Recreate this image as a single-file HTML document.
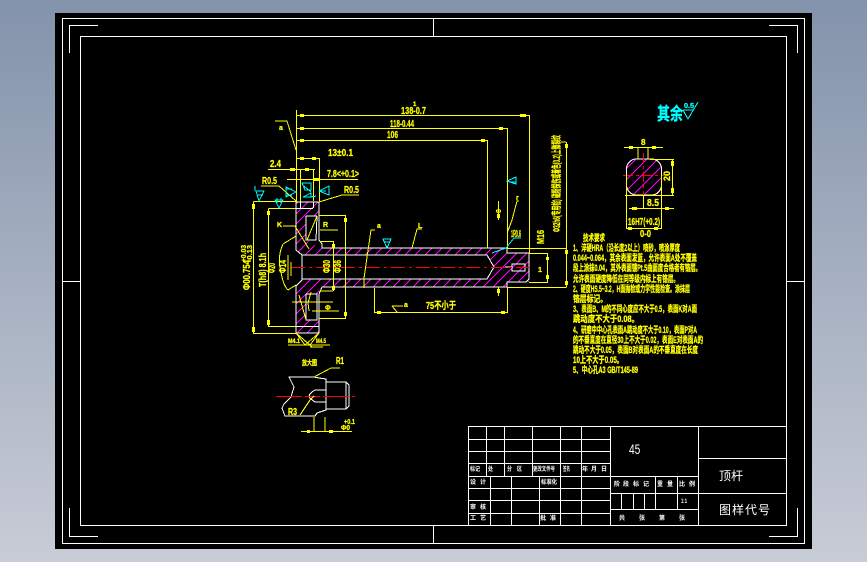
<!DOCTYPE html>
<html><head><meta charset="utf-8"><style>
html,body{margin:0;padding:0;width:867px;height:562px;overflow:hidden;background:linear-gradient(180deg,#8393ab 0%,#a9b3c3 55%,#c8ccd6 100%)}
svg{position:absolute;left:0;top:0}
text{font-family:"Liberation Sans","Noto Sans CJK SC",sans-serif}
.y{fill:#ff0;font-weight:bold;font-size:10px;stroke:#ff0;stroke-width:.25px}
.c{fill:#0ff;font-weight:bold;stroke:#0ff;stroke-width:.3px}
.w{fill:#fff;font-size:6px;font-weight:bold}
.t{fill:#ff0;font-weight:bold;font-size:9px;stroke:#ff0;stroke-width:.3px;font-family:"WenQuanYi Zen Hei","Noto Sans CJK SC",sans-serif}
</style></head><body>
<svg width="867" height="562" viewBox="0 0 867 562" shape-rendering="crispEdges">
<defs>
<clipPath id="cp"><path d="M296 202H319V216H306V240L319 248H333V255H302L296 250ZM333 248H487V255H333ZM320 279H507V287H320ZM487 248H507V253H529V282H507V287H487V279L494 267L487 255ZM296 286L302 279H320V287L319 294H306V320H319V333H296Z"/></clipPath>
<clipPath id="cs"><rect x="626" y="159" width="35" height="36" rx="10"/></clipPath>
</defs>
<rect x="55" y="13" width="757" height="536" fill="#000"/>
<!-- frame -->
<g fill="none" stroke="#fff" stroke-width="1">
<rect x="62.5" y="18.5" width="742" height="525"/>
<rect x="80.5" y="36.5" width="706" height="489"/>
<path d="M69.5 53V25.5H98M797.5 508V536.5H769M769 25.5H797.5V53M69.5 508V536.5H98"/>
<path d="M433.5 18V36M433.5 525V543M62 281.5H80M786 281.5H804"/>
</g>
<!-- hatch -->
<g clip-path="url(#cp)"><path fill="none" stroke="#f0f" stroke-width="1" d="M310 190L160 340M320 190L170 340M330 190L180 340M340 190L190 340M350 190L200 340M360 190L210 340M370 190L220 340M380 190L230 340M390 190L240 340M400 190L250 340M410 190L260 340M420 190L270 340M430 190L280 340M440 190L290 340M450 190L300 340M460 190L310 340M470 190L320 340M480 190L330 340M490 190L340 340M500 190L350 340M510 190L360 340M520 190L370 340M530 190L380 340M540 190L390 340M550 190L400 340M560 190L410 340M570 190L420 340M580 190L430 340M590 190L440 340M600 190L450 340M610 190L460 340M620 190L470 340M630 190L480 340"/></g>
<g clip-path="url(#cs)"><path fill="none" stroke="#f0f" stroke-width="1" d="M645 150L595 200M656 150L606 200M667 150L617 200M678 150L628 200M689 150L639 200M700 150L650 200"/></g>
<!-- white part outline -->
<g fill="none" stroke="#fff" stroke-width="1">
<path d="M296 202H319V240L322 244V248H487L507 248V253H529V279L526 282H507V287H322L319 294V333H296V286L302 280V255L296 250Z"/>
<path d="M302 255H487L494 267L487 279H302"/>
<path d="M306 216H317M306 216V240L316 240L317 216M306 294V320H317V294H306"/>
<path d="M512 264H525V271H512ZM505 267H512"/>
<path d="M296 208.5H313M300.5 202V208M313.5 202V208M296 326.5H319"/>
<rect x="626.5" y="159" width="35" height="36" rx="10"/>
<path d="M638 159V157M648 159V157"/>
<path d="M289 377H314L319 378L326 379V410L317 413L315 416H285L282 408L284 404L291 397L294 387Z"/>
<path d="M326 382H346L349 385V406L346 409H326M346 382V409"/>
<path d="M315 390H326M315 402H326M315 390Q306 395 311 399L315 402"/>
</g>
<!-- red centre lines -->
<g stroke="#f00" stroke-width="1" fill="none">
<path d="M291 267.5H533" stroke-dasharray="14 4 3 4"/>
<path d="M276 396.5H355" stroke-dasharray="26 3 15 3"/>
<path d="M623 175.5H664" stroke-dasharray="10 3 3 3"/>
<path d="M643.5 153V197" stroke-dasharray="10 3 3 3"/>
</g>
<!-- yellow dimensions -->
<g fill="none" stroke="#ff0" stroke-width="1">
<path d="M296.5 115.5H529.5V253M296.5 128.5H507.5V248M296.5 140.5H487.5V248M296.5 158.5H319.5V201M296.5 110V202"/>
<path d="M268 169.5H315M300.5 169V202M313.5 169V201"/>
<path d="M287 179.5H358"/>
<path d="M275 121H287L296 150"/>
<path d="M261 186H279L296 201"/>
<path d="M319 202L342 195H359"/>
<path d="M253.5 201.5H296M253.5 201.5V333.5H296"/>
<path d="M268.5 208.5H296M268.5 208.5V326.5H296"/>
<path d="M319 215.5H345.5V318.5H319"/>
<path d="M320 241.5H333.5V291M333 291H320"/>
<path d="M283 226H295L309 249"/>
<path d="M310 347H323"/>
<path d="M317 216L307 240M320 230H338"/>
<path d="M498.5 201V220M498.5 287V296"/>
<path d="M507.5 232L512 220L517 201H519"/>
<path d="M507 248.5H566.5M507 287.5H566.5M566.5 142V287M561 142H566M529 253.5H547.5M529 282.5H547.5M547.5 253V283"/>
<path d="M374.5 288V312.5H507.5V287"/>
<path d="M392 306L397 312M392 306H403"/>
<path d="M375 230H371L364 278M364 288V278"/>
<path d="M422 229H417L412 248"/>
<path d="M292 302H333M312 311H339M311 292L308 303L309 311M299 295L306 320"/>
<path d="M296 333L305 345L319 333M296 333L310 345L319 333M288 345H330"/>
<path d="M312 347L296 333"/>
<path d="M283 244Q277 257 281 272Q283 285 288 290M283 244L296 236M288 290L296 285"/>
<path d="M291 262V276M288 255V280"/>
<path d="M638 147V159M648 147V159M624 147.5H663M650 159.5H674M625 195.5H674M672.5 159V195M643.5 195V208M629 208.5H674M626.5 175V228M661.5 175V228M626 228.5H662"/>
<path d="M314 417V432M325 417V432M301 431.5H352M314 377L331 368H340M300 415L310 400L314 396"/>
</g>
<!-- arrow ticks -->
<g stroke="#ff0" stroke-width="3" fill="none">
<path d="M300 115.5H304M520 115.5H526M300 128.5H304M499 128.5H503M300 140.5H304M481 140.5H485M300 158.5H304M312 158.5H316"/>
<path d="M290 169.5H295M305 169.5H309M314 179.5H320M253.5 204V209M268.5 211V215M253.5 327V332M268.5 320V325M345.5 218V222M345.5 312V316M333.5 244V248M333.5 286V290M672.5 161V166M672.5 188V193M632 208.5H637M665 208.5H669M628 228.5H632M654 228.5H658M629 147.5H633M652 147.5H656M547.5 257V260M547.5 275V279M566.5 144V148M566.5 250V254M566.5 281V285M377 312.5H381M501 312.5H505M498.5 214V218M498.5 289V293"/>
<path d="M307 431.5H310M329 431.5H333"/>
</g>
<g class="y">
<text x="401" y="114" textLength="25" lengthAdjust="spacingAndGlyphs">138-0.7</text>
<text x="390" y="127" textLength="24" lengthAdjust="spacingAndGlyphs">118-0.44</text>
<text x="387" y="138" textLength="11" lengthAdjust="spacingAndGlyphs">106</text>
<text x="328" y="156" textLength="25" lengthAdjust="spacingAndGlyphs">13±0.1</text>
<text x="270" y="167" textLength="11" lengthAdjust="spacingAndGlyphs">2.4</text>
<text x="327" y="177" textLength="32" lengthAdjust="spacingAndGlyphs">7.8&lt;+0.1&gt;</text>
<text x="262" y="184" textLength="15" lengthAdjust="spacingAndGlyphs">R0.5</text>
<text x="344" y="193" textLength="15" lengthAdjust="spacingAndGlyphs">R0.5</text>
<text x="279" y="130" font-size="7">a</text>
<text x="413" y="106" font-size="6">1</text>
<text x="516" y="200" font-size="7">r</text>
<text x="277" y="227" font-size="7">K</text>
<text x="323" y="227" font-size="7">R</text>
<text x="377" y="228" font-size="7">a</text>
<text x="418" y="228" font-size="7">L</text>
<text x="404" y="307" font-size="7">a</text>
<text x="426" y="309" textLength="30" lengthAdjust="spacingAndGlyphs">75不小于</text>
<text x="325" y="310" font-size="7">Φ</text>
<text x="288" y="343" font-size="6" textLength="12" lengthAdjust="spacingAndGlyphs">M4.1</text>
<text x="316" y="343" font-size="6" textLength="10" lengthAdjust="spacingAndGlyphs">M4.5</text>
<text x="302" y="365" font-size="7" textLength="15" lengthAdjust="spacingAndGlyphs">放大图</text>
<text x="336" y="364" textLength="8" lengthAdjust="spacingAndGlyphs">R1</text>
<text x="288" y="415" textLength="9" lengthAdjust="spacingAndGlyphs">R3</text>
<text x="344" y="424" font-size="7" textLength="11" lengthAdjust="spacingAndGlyphs">+0.1</text>
<text x="341" y="430" font-size="7" textLength="9" lengthAdjust="spacingAndGlyphs">Φ0</text>
<text x="641" y="145" font-size="8">8</text>
<text x="647" y="206" textLength="12" lengthAdjust="spacingAndGlyphs">8.5</text>
<text x="628" y="225" textLength="32" lengthAdjust="spacingAndGlyphs">16H7(+0.2)</text>
<text x="640" y="237" textLength="11" lengthAdjust="spacingAndGlyphs">0-0</text>
<text transform="translate(670 181) rotate(-90)" font-size="9">20</text>
<text transform="translate(250 290) rotate(-90)" textLength="30" lengthAdjust="spacingAndGlyphs">Φ00.754</text>
<text transform="translate(246 262) rotate(-90)" font-size="7" textLength="17" lengthAdjust="spacingAndGlyphs">+0.03</text>
<text transform="translate(252 262) rotate(-90)" font-size="7" textLength="17" lengthAdjust="spacingAndGlyphs">-0.13</text>
<text transform="translate(266 287) rotate(-90)" textLength="34" lengthAdjust="spacingAndGlyphs">T(h8) 8.1h</text>
<text transform="translate(275 273) rotate(-90)" textLength="10" lengthAdjust="spacingAndGlyphs">Φ20</text>
<text transform="translate(286 273) rotate(-90)" textLength="13" lengthAdjust="spacingAndGlyphs">Φ14</text>
<text transform="translate(330 273) rotate(-90)" textLength="13" lengthAdjust="spacingAndGlyphs">Φ30</text>
<text transform="translate(341 273) rotate(-90)" textLength="13" lengthAdjust="spacingAndGlyphs">Φ36</text>
<text transform="translate(544 244) rotate(-90)" textLength="14" lengthAdjust="spacingAndGlyphs">M16</text>
<text x="538" y="272" font-size="7">1</text>
<text transform="translate(501 213) rotate(-90)" font-size="7">0</text>
<text transform="translate(560 232) rotate(-90)" textLength="97" lengthAdjust="spacingAndGlyphs">Φ32h6(专用检) 磁粉探伤或着色(0.2)上微裂纹</text>
</g>
<!-- tech text -->
<g class="t">
<text x="583" y="241" textLength="22" lengthAdjust="spacingAndGlyphs">技术要求</text>
<text x="573" y="251" textLength="107" lengthAdjust="spacingAndGlyphs">1、淬硬HRA（沿长度2以上）喷砂，喷涂厚度</text>
<text x="573" y="261" textLength="124" lengthAdjust="spacingAndGlyphs">0.044~0.064，其余表面发蓝，允许表面A处不覆盖</text>
<text x="573" y="271" textLength="128" lengthAdjust="spacingAndGlyphs">段上涂抹0.04，其外表面镀Pt.5曲面度合格者有铬层。</text>
<text x="573" y="282" textLength="106" lengthAdjust="spacingAndGlyphs">允许表面硬度降低在同等级内标上有铬层。</text>
<text x="573" y="292" textLength="117" lengthAdjust="spacingAndGlyphs">2、硬度HS.5~3.2，H面抛检或力学性能检查。涂抹层</text>
<text x="573" y="302" textLength="34" lengthAdjust="spacingAndGlyphs">铬层标记。</text>
<text x="573" y="312" textLength="124" lengthAdjust="spacingAndGlyphs">3、表面B、M的不同心度应不大于0.5，表面K对A面</text>
<text x="573" y="322" textLength="66" lengthAdjust="spacingAndGlyphs">跳动度不大于0.08。</text>
<text x="573" y="333" textLength="124" lengthAdjust="spacingAndGlyphs">4、研磨中中心孔表面A跳动度不大于0.10，表面P对A</text>
<text x="573" y="343" textLength="130" lengthAdjust="spacingAndGlyphs">的不垂直度在直径30上不大于0.02，表面E对表面A的</text>
<text x="573" y="353" textLength="125" lengthAdjust="spacingAndGlyphs">跳动不大于0.05，表面B对表面A的不垂直度在长度</text>
<text x="573" y="363" textLength="50" lengthAdjust="spacingAndGlyphs">10上不大于0.05。</text>
<text x="573" y="373" textLength="65" lengthAdjust="spacingAndGlyphs">5、中心孔A3 GB/T145-89</text>
</g>
<!-- cyan -->
<text transform="translate(657 120) scale(1 1.35)" class="c" font-size="13" textLength="26" lengthAdjust="spacingAndGlyphs">其余</text>
<text x="684" y="108" class="c" font-size="7" textLength="10" lengthAdjust="spacingAndGlyphs">0.5</text>
<g fill="none" stroke="#0ff" stroke-width="1">
<path d="M683 110H693M683 110L688 119L698 102"/>
<path d="M256 191H264L259 201L256 191M258 195H263M255 186V191"/>
<path d="M275 200H283L279 208ZM277 198V203M281 198V203"/>
<path d="M286 187L296 192L286 197ZM286 189H292M286 195H292"/>
<path d="M302 183H311V190H305ZM304 186L311 192"/>
<path d="M303 197H311V193L303 197M303 197H311L316 196"/>
<path d="M319 191L329 186V195ZM320 191H326"/>
<path d="M507 181L516 177V184ZM511 182H516"/>
<path d="M383 239H391L387 248ZM384 242H390"/>
<path d="M492 253L506 248L514 238H521" stroke-width="1"/>
</g>
<text x="511" y="237" class="y" font-size="6" textLength="10" lengthAdjust="spacingAndGlyphs">1R0.6</text>
<!-- title block -->
<g fill="none" stroke="#fff" stroke-width="1">
<rect x="468.5" y="426.5" width="318" height="99"/>
<path d="M468 439.5H611M468 451.5H611M468 463.5H611M468 476.5H699M468 488.5H611M468 500.5H611M468 513.5H611"/>
<path d="M486.5 427V476M504.5 427V476M532.5 427V476M560.5 427V476M581.5 427V476"/>
<path d="M490.5 476V525M511.5 476V525M539.5 476V525M560.5 476V525M581.5 476V525"/>
<path d="M610.5 427V525M698.5 427V525"/>
<path d="M699 458.5H786M611 493.5H786M611 509.5H699"/>
<path d="M655.5 476V509M677.5 476V509M621.5 493V509M633.5 493V509M644.5 493V509"/>
</g>
<g class="w">
<text x="470" y="471" textLength="10" lengthAdjust="spacingAndGlyphs">标记</text>
<text x="488" y="471" textLength="5" lengthAdjust="spacingAndGlyphs">处</text>
<text x="507" y="471" textLength="5" lengthAdjust="spacingAndGlyphs">分</text>
<text x="517" y="471" textLength="5" lengthAdjust="spacingAndGlyphs">区</text>
<text x="533" y="471" textLength="22" lengthAdjust="spacingAndGlyphs">更改文件号</text>
<text x="563" y="471" textLength="7" lengthAdjust="spacingAndGlyphs">签名</text>
<text x="582" y="471" textLength="4">年</text><text x="591" y="471">月</text><text x="601" y="471">日</text>
<text x="470" y="484">设</text><text x="480" y="484">计</text>
<text x="541" y="484" textLength="16" lengthAdjust="spacingAndGlyphs">标准化</text>
<text x="470" y="509">审</text><text x="480" y="509">核</text>
<text x="470" y="520">工</text><text x="480" y="520">艺</text>
<text x="540" y="520">批</text><text x="550" y="520">准</text>
<text x="614" y="486">阶</text><text x="623" y="486">段</text><text x="633" y="486">标</text><text x="643" y="486">记</text>
<text x="657" y="486">重</text><text x="667" y="486">量</text>
<text x="679" y="486">比</text><text x="689" y="486">例</text>
<text x="681" y="503" textLength="6" lengthAdjust="spacingAndGlyphs">1:1</text>
<text x="619" y="520">共</text><text x="639" y="520">张</text><text x="659" y="520">第</text><text x="679" y="520">张</text>
</g>
<g fill="#fff" font-family="WenQuanYi Zen Hei,Noto Sans CJK SC,sans-serif">
<text transform="translate(629 454) scale(.85 1.15)" font-size="12" font-family="Liberation Sans,sans-serif">45</text>
<text x="719" y="480" font-size="12">顶杆</text>
<text x="719" y="514" font-size="12" letter-spacing="1">图样代号</text>
</g>
</svg>
</body></html>
